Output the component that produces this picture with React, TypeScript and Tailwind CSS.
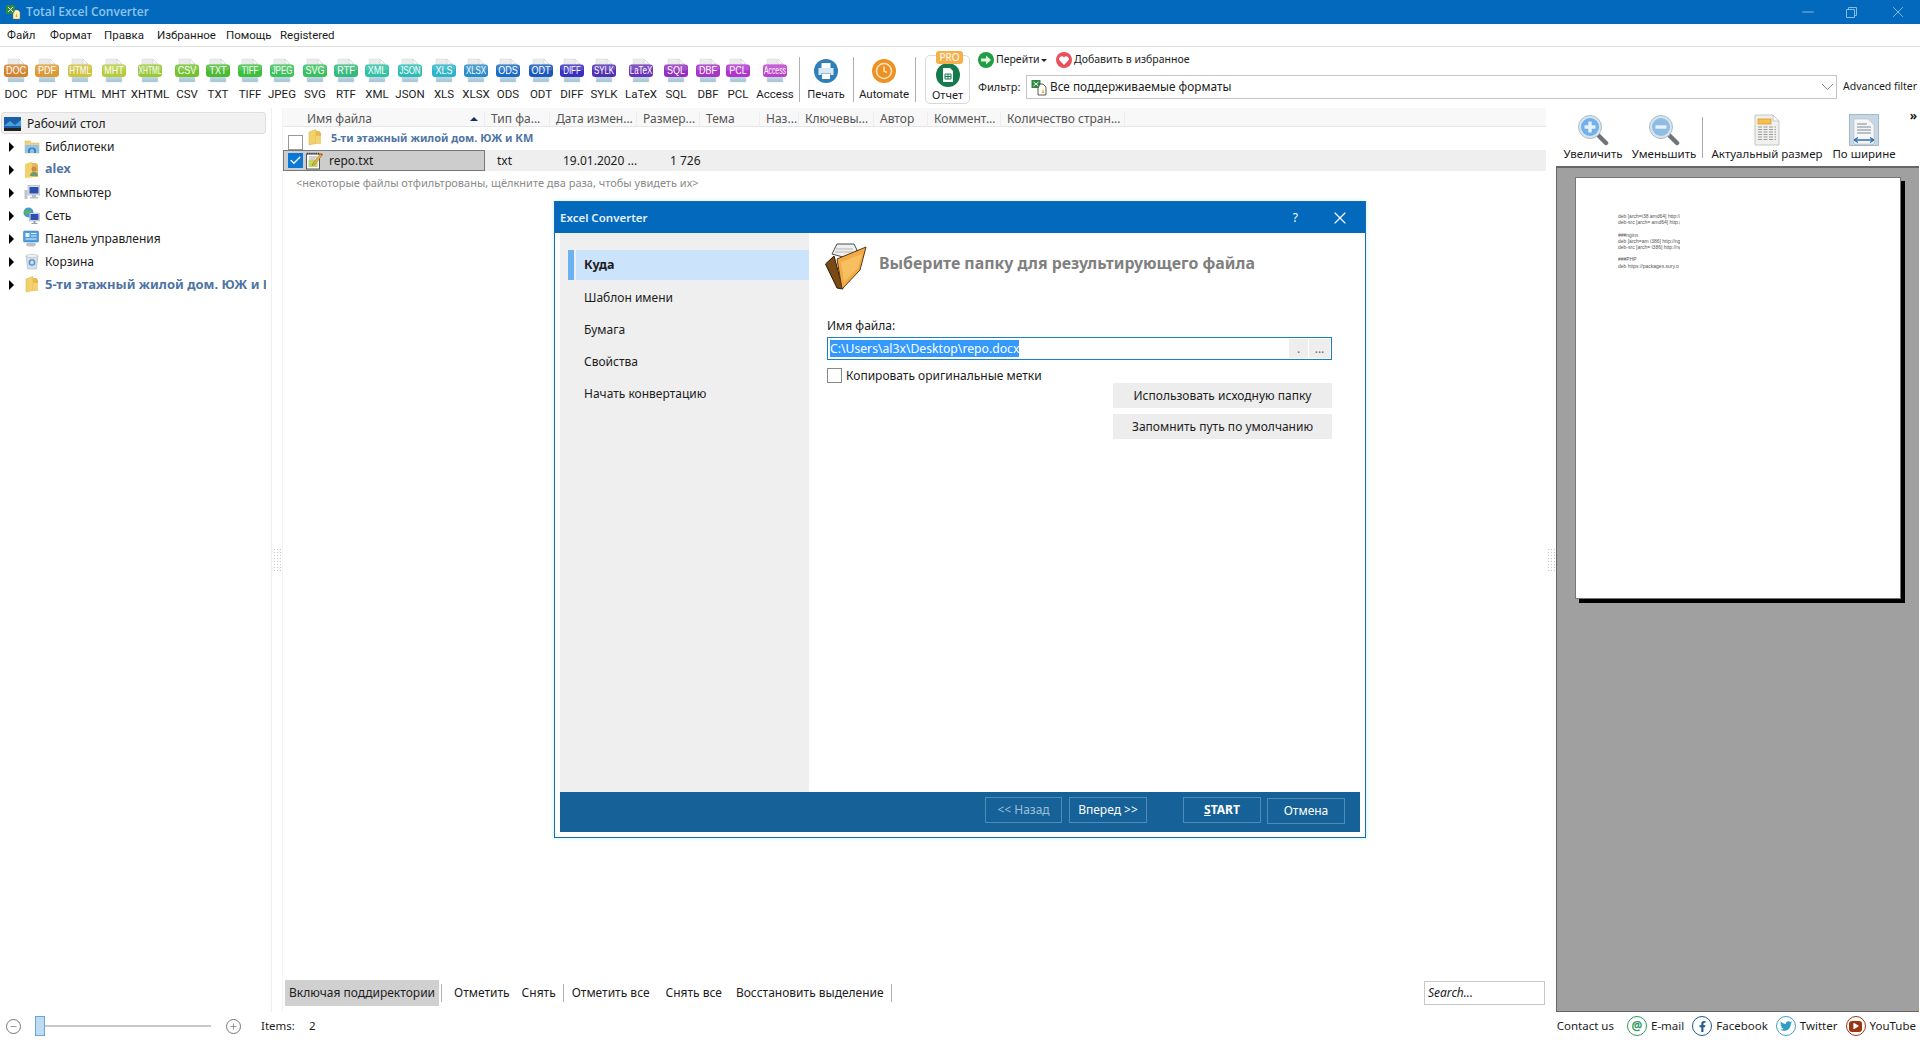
import { FaFacebookF, FaTwitter, FaPlay } from 'react-icons/fa';
import { Check, X, Minus, Plus } from 'lucide-react';

const FORMATS = [
  { name: 'DOC', color: '#d4812a', ml: 'ml-[3px]' },
  { name: 'PDF', color: '#dd9a34', ml: 'ml-[5px]' },
  { name: 'HTML', color: '#cfc23e', ml: 'ml-[7px]' },
  { name: 'MHT', color: '#b4cc3c', ml: 'ml-[8px]' },
  { name: 'XHTML', color: '#98c936', ml: 'ml-[10px]' },
  { name: 'CSV', color: '#72c22e', ml: 'ml-[11px]' },
  { name: 'TXT', color: '#4cba30', ml: 'ml-[5px]' },
  { name: 'TIFF', color: '#3cc03e', ml: 'ml-[6px]' },
  { name: 'JPEG', color: '#3cc25a', ml: 'ml-[6px]' },
  { name: 'SVG', color: '#38bf5e', ml: 'ml-[7px]' },
  { name: 'RTF', color: '#34ba7a', ml: 'ml-[5px]' },
  { name: 'XML', color: '#2fc2a4', ml: 'ml-[5px]' },
  { name: 'JSON', color: '#2cbcb4', ml: 'ml-[7px]' },
  { name: 'XLS', color: '#2cb4c8', ml: 'ml-[8px]' },
  { name: 'XLSX', color: '#2c8cc8', ml: 'ml-[6px]' },
  { name: 'ODS', color: '#1a6cc4', ml: 'ml-[6px]' },
  { name: 'ODT', color: '#1a58c0', ml: 'ml-[7px]' },
  { name: 'DIFF', color: '#3a30c0', ml: 'ml-[5px]' },
  { name: 'SYLK', color: '#5230b4', ml: 'ml-[6px]' },
  { name: 'LaTeX', color: '#6a30b8', ml: 'ml-[11px]' },
  { name: 'SQL', color: '#9430c0', ml: 'ml-[9px]' },
  { name: 'DBF', color: '#a834c4', ml: 'ml-[6px]' },
  { name: 'PCL', color: '#b034cc', ml: 'ml-[4px]' },
  { name: 'Access', color: '#bc40cc', ml: 'ml-[11px]' },
];

const COLUMNS = [
  { label: 'Тип фа...', w: 'w-[65px]' },
  { label: 'Дата измен...', w: 'w-[87px]' },
  { label: 'Размер...', w: 'w-[63px]' },
  { label: 'Тема', w: 'w-[60px]' },
  { label: 'Наз...', w: 'w-[39px]' },
  { label: 'Ключевы...', w: 'w-[75px]' },
  { label: 'Автор', w: 'w-[54px]' },
  { label: 'Коммент...', w: 'w-[73px]' },
  { label: 'Количество стран...', w: 'w-[124px]' },
];

const PREVIEW_LINES = [
  'deb [arch=i38 amd64] http://',
  'deb-src [arch= amd64] http://',
  '',
  '###nginx',
  'deb [arch=am i386] http://ng',
  'deb-src [arch= i386] http://ng',
  '',
  '###PHP',
  'deb https://packages.sury.o',
];

function bandScale(name: string) {
  if (name === 'Access') return 'scale-x-[0.62]';
  if (name === 'XHTML') return 'scale-x-[0.62]';
  if (name === 'LaTeX') return 'scale-x-[0.72]';
  if (name.length === 4) return 'scale-x-[0.72]';
  return 'scale-x-[0.82]';
}

function FormatIcon({ name, color }: { name: string; color: string }) {
  return (
    <div className="relative w-[26px] h-[25px] shrink-0">
      <svg width="26" height="25" viewBox="0 0 26 25">
        <defs>
          <linearGradient id={`pg-${name}`} x1="0" y1="0" x2="0" y2="1">
            <stop offset="0" stopColor="#ececec" />
            <stop offset="0.6" stopColor="#dfe9ee" />
            <stop offset="1" stopColor="#9fc2d6" />
          </linearGradient>
        </defs>
        <path d="M5 1h11l5 5v18H5z" fill={`url(#pg-${name})`} stroke="#d4d8da" strokeWidth="0.5" />
        <path d="M16 1v5h5z" fill="#fafafa" stroke="#c6c6c6" strokeWidth="0.5" />
        <rect x="1" y="6.5" width="24" height="12.5" rx="3" fill={color} />
        <rect x="1.5" y="7" width="23" height="5.5" rx="2.5" fill="#ffffff" opacity="0.16" />
      </svg>
      <span
        className={`absolute left-0 right-0 top-[6px] h-[13px] flex items-center justify-center whitespace-nowrap text-white text-[11px] leading-[13px] font-['Liberation_Sans',sans-serif] ${bandScale(name)}`}
      >
        {name}
      </span>
    </div>
  );
}

function FolderIcon() {
  return (
    <svg width="16" height="17" viewBox="0 0 16 17" className="shrink-0">
      <path d="M2 3l7-2.5v14L2 16z" fill="#f2d16b" stroke="#d8ae44" strokeWidth="0.5" />
      <path d="M9 2h3l2 2v11H9z" fill="#e8b94e" />
      <path d="M9 7h5v8H9z" fill="#f7dc8a" opacity="0.7" />
    </svg>
  );
}

function TreeIcon({ kind }: { kind: string }) {
  if (kind === 'library') {
    return (
      <svg width="16" height="17" viewBox="0 0 16 17" className="shrink-0">
        <path d="M1 3h5l1 2h8v10H1z" fill="#f3d27a" stroke="#d4ad50" strokeWidth="0.5" />
        <path d="M1 7h14v8H1z" fill="#8fc4ea" />
        <path d="M4 15v-3a4 2.5 0 0 1 8 0v3h-2v-2.5a2 1.5 0 0 0-4 0V15z" fill="#3f83c4" />
      </svg>
    );
  }
  if (kind === 'user') {
    return (
      <svg width="16" height="18" viewBox="0 0 16 18" className="shrink-0">
        <path d="M1 3l7-2.5v16L1 17z" fill="#f2d16b" />
        <path d="M8 2h4l2 2v12H8z" fill="#e8b94e" />
        <circle cx="10" cy="8" r="2.5" fill="#c48a5a" />
        <path d="M6 15c0-3 2-4 4-4s4 1 4 4z" fill="#6f9c6c" />
      </svg>
    );
  }
  if (kind === 'computer') {
    return (
      <svg width="16" height="17" viewBox="0 0 16 17" className="shrink-0">
        <rect x="0.5" y="6" width="3" height="9" fill="#bfc5cb" />
        <rect x="4" y="1.5" width="12" height="9.5" fill="#dfe3e8" stroke="#98a0a8" strokeWidth="0.5" />
        <rect x="5.5" y="3" width="9" height="6.5" fill="#2c4fb4" />
        <path d="M8 11h4v2h2v1.5H6V13h2z" fill="#b8bec5" />
      </svg>
    );
  }
  if (kind === 'network') {
    return (
      <svg width="17" height="18" viewBox="0 0 17 18" className="shrink-0">
        <circle cx="5.5" cy="5.5" r="5" fill="#3f9bd8" />
        <path d="M2 3c2-1 3 1 5 0s1 3-1 3-1 3-3 2-2-4-1-5z" fill="#5cb35a" />
        <rect x="6.5" y="6" width="10" height="8" fill="#dfe3e8" stroke="#98a0a8" strokeWidth="0.5" />
        <rect x="7.5" y="7" width="8" height="6" fill="#2c4fb4" />
        <path d="M10.5 14h2v2h2v1h-6v-1h2z" fill="#9aa2aa" />
      </svg>
    );
  }
  if (kind === 'panel') {
    return (
      <svg width="17" height="17" viewBox="0 0 17 17" className="shrink-0">
        <rect x="0.5" y="1" width="15" height="11" rx="1" fill="#4f9fe0" stroke="#2f72b4" strokeWidth="0.5" />
        <rect x="2.5" y="3" width="4" height="4" fill="#e8f2fa" />
        <path d="M8 3.5h5.5M8 6h5.5M2.5 9h11" stroke="#e8f2fa" strokeWidth="1.2" />
        <ellipse cx="8" cy="14.5" rx="5" ry="2" fill="#b8c2cc" />
      </svg>
    );
  }
  if (kind === 'trash') {
    return (
      <svg width="16" height="17" viewBox="0 0 16 17" className="shrink-0">
        <path d="M2 3h12l-1.5 13h-9z" fill="#d5dee6" stroke="#a2aeb8" strokeWidth="0.5" />
        <ellipse cx="8" cy="3" rx="6" ry="1.6" fill="#eef2f5" stroke="#a2aeb8" strokeWidth="0.5" />
        <circle cx="8" cy="9.5" r="2.6" fill="none" stroke="#4a94d0" strokeWidth="1.4" />
      </svg>
    );
  }
  return <FolderIcon />;
}

function TxtIcon() {
  return (
    <svg width="17" height="18" viewBox="0 0 17 18" className="shrink-0">
      <rect x="0.5" y="2" width="13" height="15" fill="#ffffff" stroke="#555555" strokeWidth="1" />
      <path d="M1 1.5h12" stroke="#333333" strokeWidth="1.4" strokeDasharray="1.2 1" />
      <rect x="2.5" y="8" width="9" height="7" fill="#bcd86a" />
      <path d="M3 5h8M3 7h6" stroke="#8a8a8a" strokeWidth="0.8" />
      <path d="M7 11l7-9 2 1.5-7 9-3 1z" fill="#e8b23c" stroke="#a06a20" strokeWidth="0.5" />
      <path d="M14 2l1-1 2 1.5-1 1z" fill="#c8442c" />
    </svg>
  );
}

function Magnifier({ plus }: { plus: boolean }) {
  return (
    <svg width="32" height="32" viewBox="0 0 32 32" className="shrink-0">
      <path d="M20 20l9 9" stroke="#6f7478" strokeWidth="4.5" strokeLinecap="round" />
      <circle cx="13" cy="13" r="11.5" fill="#d6e4ee" stroke="#aebcc8" />
      <circle cx="13" cy="13" r="9" fill={plus ? '#71b0e8' : '#8fbce2'} />
      <path d={plus ? 'M13 7.5v11M7.5 13h11' : 'M7.5 13h11'} stroke="#e6f2fb" strokeWidth="3.4" />
    </svg>
  );
}

function ActualSizeIcon() {
  return (
    <svg width="26" height="32" viewBox="0 0 26 32" className="shrink-0">
      <path d="M1 1h18l6 6v24H1z" fill="#f0f0ec" stroke="#c4c8c8" />
      <path d="M19 1v6h6z" fill="#ffffff" stroke="#c4c8c8" />
      <rect x="4" y="5" width="13" height="5" fill="#f5c04c" stroke="#d8922c" strokeWidth="0.7" />
      <path
        d="M4 13h18M4 15.5h18M4 18h18M4 20.5h18M4 23h18M4 25.5h18"
        stroke="#9a9a9a"
        strokeWidth="1"
        strokeDasharray="4 1.5"
      />
    </svg>
  );
}

function FitWidthIcon() {
  return (
    <svg width="30" height="32" viewBox="0 0 30 32" className="shrink-0">
      <rect x="0.5" y="0.5" width="29" height="31" fill="#c5d7e4" stroke="#a6b6c2" />
      <path d="M5 5h14l6 6v19H5z" fill="#f6f6f6" stroke="#a8b0b8" strokeWidth="0.5" />
      <path d="M8 10h10M8 13h14M8 16h14M8 19h14" stroke="#7a8a98" strokeWidth="1" />
      <path d="M5 26h20M5 26l4-2.5M5 26l4 2.5M25 26l-4-2.5M25 26l-4 2.5" stroke="#2f6fb4" strokeWidth="1.4" fill="none" />
    </svg>
  );
}

function OpenFolderIcon() {
  return (
    <svg width="44" height="48" viewBox="0 0 44 48" className="shrink-0">
      <path d="M0.5 22L9 14l9 33-6-1z" fill="#7a4a14" stroke="#2c1a06" />
      <path d="M7 12L12 2h17l3 6-7 9z" fill="#f0f0f0" stroke="#4a4a4a" />
      <path d="M11 7h17M10 10h18" stroke="#b4b4b4" />
      <path d="M12 17L41 5l-6 23-18 19z" fill="#f2ab45" stroke="#5a3410" />
      <path d="M16 20l21-8-4 14-14 14z" fill="#f8c56a" opacity="0.75" />
    </svg>
  );
}

function GreyGrip() {
  return (
    <div className="flex flex-col gap-[2px]">
      {[0, 1, 2, 3, 4, 5, 6, 7].map((i) => (
        <div key={i} className="flex gap-[2px]">
          <span className="w-px h-px bg-[#c8c8c8]" />
          <span className="w-px h-px bg-[#c8c8c8]" />
          <span className="w-px h-px bg-[#c8c8c8]" />
        </div>
      ))}
    </div>
  );
}

function TitleBar() {
  return (
    <div className="h-[24px] bg-[#0369bd] flex items-center shrink-0 relative">
      <svg width="16" height="16" viewBox="0 0 16 16" className="ml-[5px]">
        <rect x="1" y="1" width="9" height="9" fill="#2c8a3e" />
        <path d="M3 3l5 5M8 3l-5 5" stroke="#ffffff" strokeWidth="1" />
        <path d="M10 6h3l2 2v7H8v-5z" fill="#fdf3c4" stroke="#8a7a30" strokeWidth="0.5" />
        <path d="M10.5 13l1-4 1 4z" fill="#e8a030" />
      </svg>
      <span className="ml-[5px] text-[12px] font-semibold text-[#8cc6ee] font-['Open_Sans',sans-serif]">
        Total Excel Converter
      </span>
      <div className="ml-auto flex items-center text-[#86bde6]">
        <Minus size={18} strokeWidth={1.3} className="mr-[29px]" />
        <svg width="11" height="11" viewBox="0 0 11 11" className="mr-[32px]" fill="none" stroke="currentColor">
          <path d="M0.5 2.5h8v8h-8zM2.5 2.5V0.5h8v8h-2" />
        </svg>
        <X size={18} strokeWidth={1.3} className="mr-[13px]" />
      </div>
    </div>
  );
}

function MenuBar() {
  const items = [
    { label: 'Файл', w: 'w-[43px]' },
    { label: 'Формат', w: 'w-[54px]' },
    { label: 'Правка', w: 'w-[53px]' },
    { label: 'Избранное', w: 'w-[69px]' },
    { label: 'Помощь', w: 'w-[54px]' },
    { label: 'Registered', w: 'w-[60px]' },
  ];
  return (
    <div className="h-[23px] pt-[1px] pl-[7px] flex items-center border-b border-[#e0e0e0] shrink-0 text-[11.5px] font-['Roboto',sans-serif]">
      {items.map((m) => (
        <span key={m.label} className={m.w}>
          {m.label}
        </span>
      ))}
    </div>
  );
}

function Toolbar() {
  return (
    <div className="h-[61px] flex shrink-0 text-[11px]">
      {FORMATS.map((f) => (
        <div key={f.name} className={`${f.ml} w-[26px] flex flex-col items-center pt-[11px]`}>
          <FormatIcon name={f.name} color={f.color} />
          <span className="mt-[3px] whitespace-nowrap leading-[16px] font-['Roboto',sans-serif] text-[11.5px]">{f.name}</span>
        </div>
      ))}
      <div className="ml-[11px] mt-[10px] w-px h-[45px] bg-[#b0b0b0]" />
      <div className="ml-[1px] w-[50px] flex flex-col items-center pt-[12px]">
        <svg width="24" height="24" viewBox="0 0 24 24" className="shrink-0">
          <circle cx="12" cy="12" r="12" fill="#2f7fb8" />
          <path d="M7.5 4h9v5h-9z" fill="#ffffff" />
          <path d="M4.5 9h15v7h-3v-2h-9v2h-3z" fill="#d9e8f2" />
          <path d="M8 14.5h8V20H8z" fill="#ffffff" />
        </svg>
        <span className="mt-[3px] whitespace-nowrap leading-[16px]">Печать</span>
      </div>
      <div className="ml-[2px] mt-[10px] w-px h-[45px] bg-[#b0b0b0]" />
      <div className="ml-[2px] w-[56px] flex flex-col items-center pt-[12px]">
        <svg width="24" height="24" viewBox="0 0 24 24" className="shrink-0">
          <circle cx="12" cy="12" r="12" fill="#ee9122" />
          <circle cx="12" cy="12" r="7.5" fill="none" stroke="#fbe3bf" strokeWidth="1.6" />
          <path d="M12 7.5V12l3 1.5" fill="none" stroke="#fbe3bf" strokeWidth="1.6" />
        </svg>
        <span className="mt-[3px] whitespace-nowrap leading-[16px] font-['Roboto',sans-serif] text-[11.5px]">Automate</span>
      </div>
      <div className="ml-[3px] mt-[10px] w-px h-[45px] bg-[#b0b0b0]" />
      <div className="ml-[9px] mt-[8px] w-[45px] h-[49px] relative rounded-[5px] border border-[#d8d8d8] flex flex-col items-center pt-[7px]">
        <span className="absolute left-[10px] -top-[5px] w-[27px] h-[13px] rounded-[3px] bg-[#f5b04a] text-white text-[10px] leading-[13px] text-center">
          PRO
        </span>
        <svg width="24" height="24" viewBox="0 0 24 24" className="shrink-0">
          <circle cx="12" cy="12" r="12" fill="#157a4c" />
          <path d="M7 5h7l3 3v11H7z" fill="#ffffff" />
          <path d="M9 11h6v5H9zM9 13.5h6M12 11v5" fill="none" stroke="#157a4c" />
        </svg>
        <span className="whitespace-nowrap leading-[16px]">Отчет</span>
      </div>
      <div className="ml-[8px] flex-1 flex flex-col min-w-0">
        <div className="flex items-center h-[16px] mt-[5px] text-[10.5px]">
          <svg width="16" height="16" viewBox="0 0 16 16" className="shrink-0">
            <circle cx="8" cy="8" r="8" fill="#1f9e46" />
            <path d="M3 6.5h5V3.5L13 8l-5 4.5v-3H3z" fill="#e6f5e0" />
          </svg>
          <span className="ml-[2px] w-[43px]">Перейти</span>
          <span className="ml-[2px] w-0 h-0 border-x-[3px] border-x-transparent border-t-[3px] border-t-[#222]" />
          <svg width="16" height="16" viewBox="0 0 16 16" className="ml-[9px] shrink-0">
            <circle cx="8" cy="8" r="8" fill="#e8525c" />
            <path d="M8 13L3.5 8.2a2.6 2.6 0 0 1 4.5-2.6 2.6 2.6 0 0 1 4.5 2.6z" fill="#ffffff" />
          </svg>
          <span className="ml-[2px]">Добавить в избранное</span>
        </div>
        <div className="flex items-center mt-[7px]">
          <span className="w-[48px]">Фильтр:</span>
          <div className="w-[811px] h-[24px] border border-[#c4c4c4] flex items-center text-[11.8px]">
            <svg width="16" height="17" viewBox="0 0 16 17" className="ml-[4px] shrink-0">
              <rect x="0.5" y="1" width="9" height="8" fill="#2c8a3e" />
              <path d="M2.5 3l5 4M7.5 3l-5 4" stroke="#ffffff" />
              <path d="M9 5h3l3 3v8H7V9z" fill="#fdfdf4" stroke="#333333" strokeWidth="0.8" />
              <path d="M11 14l1-4 1 4z" fill="#e8a030" />
            </svg>
            <span className="ml-[3px]">Все поддерживаемые форматы</span>
            <svg width="13" height="8" viewBox="0 0 13 8" className="ml-auto mr-[2px]" fill="none" stroke="#888888">
              <path d="M1 1l5.5 5.5L12 1" />
            </svg>
          </div>
          <span className="ml-[6px] whitespace-nowrap text-[10.5px]">Advanced filter</span>
        </div>
      </div>
    </div>
  );
}

function TreePane() {
  const rows = [
    { kind: 'library', label: 'Библиотеки', cls: '' },
    { kind: 'user', label: 'alex', cls: 'font-bold text-[#4f74a3] text-[12.5px]' },
    { kind: 'computer', label: 'Компьютер', cls: '' },
    { kind: 'network', label: 'Сеть', cls: '' },
    { kind: 'panel', label: 'Панель управления', cls: '' },
    { kind: 'trash', label: 'Корзина', cls: '' },
    { kind: 'folder', label: '5-ти этажный жилой дом. ЮЖ и КМ', cls: 'font-bold text-[#4f74a3] text-[13px]' },
  ];
  return (
    <aside className="w-[272px] shrink-0 pl-[1px] pr-[5px] pt-[4px] border-r border-[#efefef] text-[12px]">
      <div className="h-[22px] rounded-[3px] border border-[#dedede] bg-[#f1f1f1] flex items-center pl-[2px] pt-[1px]">
        <svg width="17" height="14" viewBox="0 0 17 14" className="shrink-0">
          <rect width="17" height="11" fill="#1a5fa8" />
          <path d="M0 9l6-5 5 4 6-5v6H0z" fill="#4aa0dc" />
          <rect y="11" width="17" height="3" fill="#222222" />
        </svg>
        <span className="ml-[6px]">Рабочий стол</span>
      </div>
      <div className="mt-[1px]">
        {rows.map((r) => (
          <div key={r.label} className="h-[23px] flex items-center overflow-hidden">
            <span className="ml-[8px] w-0 h-0 border-y-[5px] border-y-transparent border-l-[5px] border-l-black shrink-0" />
            <span className="ml-[9px] w-[17px] flex justify-center shrink-0">
              <TreeIcon kind={r.kind} />
            </span>
            <span className={`ml-[5px] whitespace-nowrap ${r.cls}`}>{r.label}</span>
          </div>
        ))}
      </div>
    </aside>
  );
}

function FileList() {
  return (
    <section className="w-[1263px] shrink-0 flex flex-col text-[12px]">
      <div className="h-[19px] pt-[3px] bg-[#f8f8f8] border-b border-[#e6e6e6] flex text-[#555555] shrink-0">
        <div className="w-[202px] pl-[24px] pr-[6px] flex items-center justify-between border-r border-[#eeeeee]">
          <span>Имя файла</span>
          <span className="w-0 h-0 border-x-[4px] border-x-transparent border-b-[4px] border-b-[#12306a]" />
        </div>
        {COLUMNS.map((c) => (
          <div key={c.label} className={`${c.w} pl-[6px] flex items-center whitespace-nowrap border-r border-[#eeeeee]`}>
            {c.label}
          </div>
        ))}
      </div>
      <div className="h-[23px] flex items-center shrink-0">
        <span className="ml-[5px] mt-[7px] w-[15px] h-[15px] border border-[#999999] bg-white shrink-0" />
        <span className="ml-[4px] -mt-[2px]">
          <FolderIcon />
        </span>
        <span className="ml-[8px] font-bold text-[#4f74a3] text-[11px]">5-ти этажный жилой дом. ЮЖ и КМ</span>
      </div>
      <div className="h-[21px] bg-[#efefef] flex items-center shrink-0">
        <div className="w-[202px] h-full bg-[#cdcdcd] border border-[#777777] flex items-center pl-[4px]">
          <span className="w-[15px] h-[15px] bg-[#0a78d7] flex items-center justify-center shrink-0">
            <Check size={13} strokeWidth={2.5} className="text-white" />
          </span>
          <span className="ml-[3px]">
            <TxtIcon />
          </span>
          <span className="ml-[6px]">repo.txt</span>
        </div>
        <span className="ml-[12px] w-[66px]">txt</span>
        <span className="w-[107px]">19.01.2020 ...</span>
        <span>1 726</span>
      </div>
      <div className="mt-[2px] pl-[13px] text-[#8a8a8a] text-[11px] leading-[20px] shrink-0">
        &lt;некоторые файлы отфильтрованы, щёлкните два раза, чтобы увидеть их&gt;
      </div>
      <div className="flex-1" />
      <div className="h-[26px] mb-[6px] flex items-center shrink-0 pr-[1px]">
        <span className="ml-[2px] w-[154px] h-full bg-[#d0d0d0] flex items-center justify-center whitespace-nowrap">
          Включая поддиректории
        </span>
        <span className="ml-[2px] w-px h-[18px] bg-[#b0b0b0]" />
        <span className="ml-[12px]">Отметить</span>
        <span className="ml-[12px]">Снять</span>
        <span className="ml-[7px] w-px h-[18px] bg-[#b0b0b0]" />
        <span className="ml-[8px]">Отметить все</span>
        <span className="ml-[16px]">Снять все</span>
        <span className="ml-[14px]">Восстановить выделение</span>
        <span className="ml-[7px] w-px h-[18px] bg-[#b0b0b0]" />
        <div className="ml-auto w-[121px] h-[24px] border border-[#c8c8c8] flex items-center pl-[3px] pb-[1px] italic">Search...</div>
      </div>
    </section>
  );
}

function PreviewPane() {
  const tools = [
    { label: 'Увеличить', w: 'w-[58px]', ml: 'ml-[8px]', icon: <Magnifier plus /> },
    { label: 'Уменьшить', w: 'w-[64px]', ml: 'ml-[10px]', icon: <Magnifier plus={false} /> },
  ];
  return (
    <aside className="w-[363px] shrink-0 flex flex-col text-[11.5px]">
      <div className="h-[58px] flex relative shrink-0">
        {tools.map((t) => (
          <div key={t.label} className={`${t.ml} ${t.w} flex flex-col items-center pt-[6px]`}>
            {t.icon}
            <span className="leading-[16px] whitespace-nowrap">{t.label}</span>
          </div>
        ))}
        <div className="ml-[6px] mt-[9px] w-px h-[41px] bg-[#aaaaaa]" />
        <div className="ml-[9px] w-[110px] flex flex-col items-center pt-[6px]">
          <ActualSizeIcon />
          <span className="leading-[16px] whitespace-nowrap">Актуальный размер</span>
        </div>
        <div className="ml-[10px] w-[64px] flex flex-col items-center pt-[6px]">
          <FitWidthIcon />
          <span className="leading-[16px] whitespace-nowrap">По ширине</span>
        </div>
        <span className="absolute right-[2px] top-[1px] text-[12px] font-bold leading-[14px]">»</span>
      </div>
      <div className="flex-1 bg-[#a0a0a0] border-t-2 border-l border-b border-[#666666] pl-[18px] pt-[9px]">
        <div className="w-[326px] h-[422px] bg-white border border-[#777777] shadow-[4px_4px_0_#000000] pl-[42px] pt-[35px]">
          <div className="w-[62px] overflow-hidden text-[5px] leading-[6.2px] text-[#555555] font-['Liberation_Sans',sans-serif] whitespace-nowrap">
            {PREVIEW_LINES.map((l, i) => (
              <div key={i} className="h-[6.2px]">
                {l}
              </div>
            ))}
          </div>
        </div>
      </div>
    </aside>
  );
}

function StatusBar() {
  const links = [
    { label: 'E-mail', ring: 'border-[#2f9a5c] text-[#2f9a5c]', ml: 'ml-[13px]', icon: <span className="text-[12px] font-bold leading-none">@</span> },
    { label: 'Facebook', ring: 'border-[#1f5a94] text-[#1f5a94]', ml: 'ml-[8px]', icon: <FaFacebookF size={11} /> },
    { label: 'Twitter', ring: 'border-[#3fa0c0] text-[#2f9cc8]', ml: 'ml-[8px]', icon: <FaTwitter size={12} /> },
    {
      label: 'YouTube',
      ring: 'border-[#9c3412] text-white',
      ml: 'ml-[8px]',
      icon: (
        <span className="w-[13px] h-[11px] rounded-[3px] bg-[#9c3412] flex items-center justify-center">
          <FaPlay size={6} />
        </span>
      ),
    },
  ];
  return (
    <div className="h-[28px] flex items-center shrink-0 text-[11.5px]">
      <span className="ml-[6px] w-[15px] h-[15px] rounded-full border border-[#777777] flex items-center justify-center text-[#777777]">
        <Minus size={9} />
      </span>
      <div className="ml-[14px] w-[10px] h-[20px] bg-[#bfdcf5] border border-[#6aa6d8] shrink-0" />
      <div className="w-[166px] h-[2px] bg-[#c8c8c8]" />
      <span className="ml-[15px] w-[15px] h-[15px] rounded-full border border-[#777777] flex items-center justify-center text-[#777777]">
        <Plus size={9} />
      </span>
      <span className="ml-[20px]">Items:</span>
      <span className="ml-[14px]">2</span>
      <div className="ml-auto flex items-center pr-[4px]">
        <span>Contact us</span>
        {links.map((l) => (
          <div key={l.label} className={`${l.ml} flex items-center`}>
            <span className={`w-[20px] h-[20px] rounded-full border-[1.5px] flex items-center justify-center ${l.ring}`}>
              {l.icon}
            </span>
            <span className="ml-[4px]">{l.label}</span>
          </div>
        ))}
      </div>
    </div>
  );
}

function ConverterDialog() {
  const steps = ['Шаблон имени', 'Бумага', 'Свойства', 'Начать конвертацию'];
  return (
    <div className="absolute left-[554px] top-[201px] w-[812px] h-[637px] bg-white border border-[#1a6ca8] shadow-[0_0_4px_#bfeeff] flex flex-col text-[12px]">
      <div className="h-[31px] bg-[#0369bd] flex items-center text-white shrink-0">
        <span className="ml-[5px] text-[11.5px] font-semibold text-[#e4f2fb]">Excel Converter</span>
        <span className="ml-auto text-[12px]">?</span>
        <X size={20} strokeWidth={1.4} className="ml-[32px] mr-[15px]" />
      </div>
      <div className="flex-1 flex px-[5px] min-h-0">
        <nav className="w-[249px] bg-[#efefef] pt-[17px] pl-[8px] shrink-0">
          <div className="flex h-[30px]">
            <span className="w-[6px] bg-[#6ab2f2]" />
            <span className="ml-[2px] flex-1 bg-[#cce4fb] pl-[8px] flex items-center font-bold text-[12.5px]">Куда</span>
          </div>
          {steps.map((s) => (
            <div key={s} className="h-[32px] pl-[16px] flex items-center relative top-[2px]">
              {s}
            </div>
          ))}
        </nav>
        <div className="flex-1 flex flex-col pl-[18px] pr-[28px] pt-[9px]">
          <div className="flex items-center h-[48px] -ml-[2px]">
            <OpenFolderIcon />
            <span className="ml-[10px] -mt-[5px] text-[15.9px] font-bold text-[#808080] whitespace-nowrap">
              Выберите папку для результирующего файла
            </span>
          </div>
          <div className="mt-[27px] leading-[17px]">Имя файла:</div>
          <div className="mt-[3px] h-[23px] border border-[#1a7fc4] flex items-center pl-[2px] pr-[1px]">
            <span className="bg-[#3399ff] text-white h-[17px] leading-[17px] whitespace-nowrap text-[12.2px]">
              C:\Users\al3x\Desktop\repo.docx
            </span>
            <span className="ml-auto w-[19px] h-[19px] bg-[#eeeeee] flex items-center justify-center text-[#666666]">.</span>
            <span className="ml-[1px] w-[21px] h-[19px] bg-[#eeeeee] flex items-center justify-center text-[#666666]">...</span>
          </div>
          <div className="mt-[8px] h-[15px] flex items-center">
            <span className="w-[15px] h-[15px] border border-[#888888] bg-white shrink-0" />
            <span className="ml-[4px]">Копировать оригинальные метки</span>
          </div>
          <button className="self-end w-[219px] h-[25px] bg-[#ededed]">Использовать исходную папку</button>
          <button className="self-end mt-[6px] w-[219px] h-[25px] bg-[#ededed]">Запомнить путь по умолчанию</button>
        </div>
      </div>
      <div className="h-[40px] mx-[5px] mb-[5px] bg-[#156198] flex justify-end pr-[15px] pt-[5px] shrink-0 text-white">
        <button className="w-[77px] h-[26px] border border-[#4d8bb9] text-[#9fc0d8]">&lt;&lt; Назад</button>
        <button className="ml-[7px] w-[78px] h-[26px] border border-[#4d8bb9]">Вперед &gt;&gt;</button>
        <button className="ml-[36px] w-[78px] h-[26px] border border-[#4d8bb9] font-bold">
          <span className="underline">S</span>TART
        </button>
        <button className="ml-[6px] mt-[1px] w-[78px] h-[26px] border border-[#4d8bb9]">Отмена</button>
      </div>
    </div>
  );
}

export default function App() {
  return (
    <div className="relative w-[1920px] h-[1040px] overflow-hidden bg-white flex flex-col text-[#1c1c1c] font-['Noto_Sans',sans-serif]">
      <TitleBar />
      <MenuBar />
      <Toolbar />
      <main className="flex-1 flex min-h-0">
        <TreePane />
        <div className="w-[11px] shrink-0 flex items-center justify-center border-r border-[#f4f4f4]">
          <GreyGrip />
        </div>
        <FileList />
        <div className="w-[10px] shrink-0 flex items-center justify-center">
          <GreyGrip />
        </div>
        <PreviewPane />
      </main>
      <StatusBar />
      <ConverterDialog />
    </div>
  );
}
